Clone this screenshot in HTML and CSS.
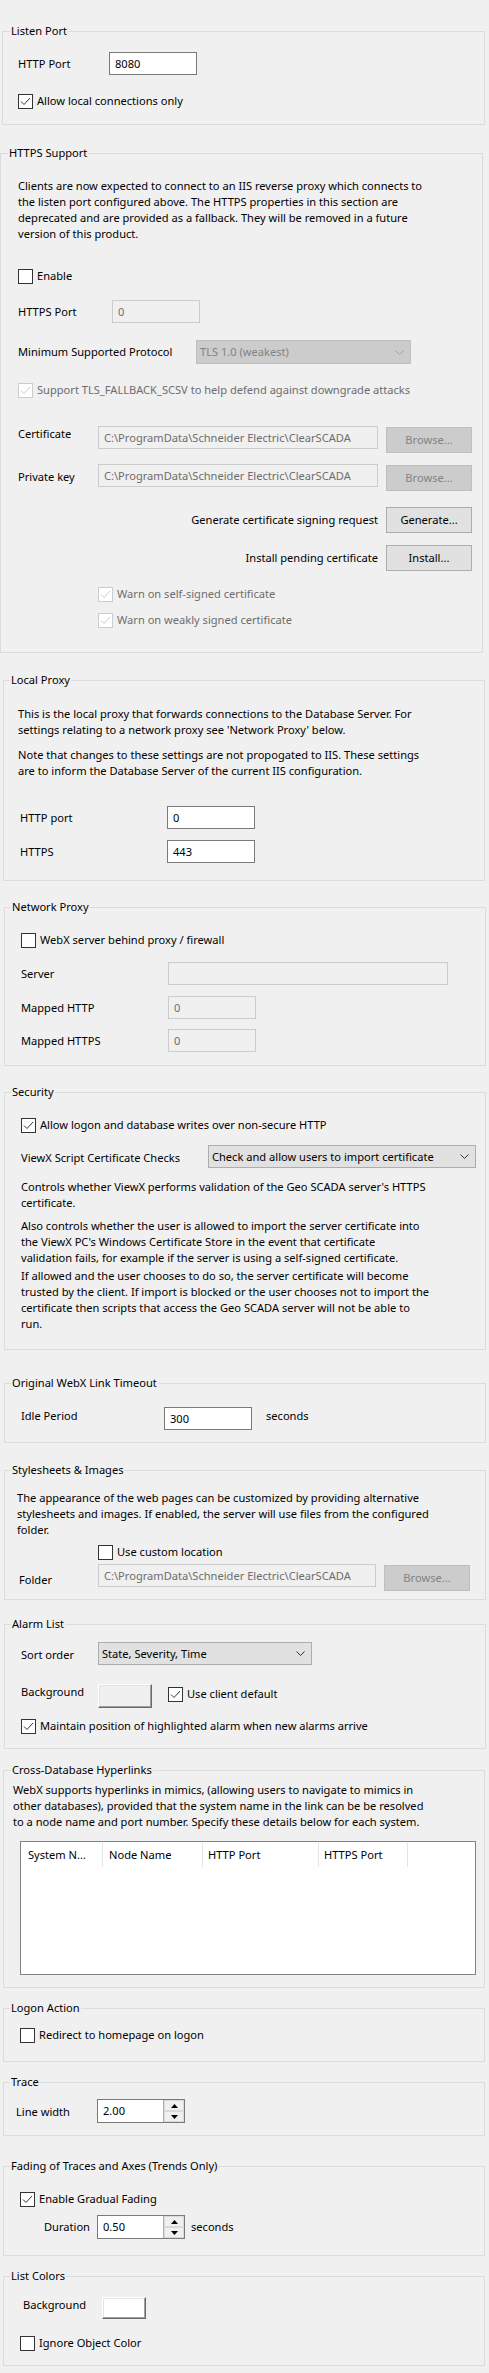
FILE: index.html
```html
<!DOCTYPE html>
<html>
<head>
<meta charset="utf-8">
<title>WebX Settings</title>
<link rel="stylesheet" href="styles.css">
</head>
<body>

<fieldset class="grp g1">
  <legend class="lg7">Listen Port</legend>
  <div class="in">
    <div class="row h23 mt13"><span class="lbl w91">HTTP Port</span><span class="tb w88">8080</span></div>
    <div class="chk mt18"><span class="cb"><svg class="tick" viewBox="0 0 13 13"><polyline points="2,6.5 5,9.5 11,3"/></svg></span>Allow local connections only</div>
  </div>
</fieldset>

<fieldset class="grp g2">
  <legend class="lg7">HTTPS Support</legend>
  <div class="in">
    <p class="para mt17">Clients are now expected to connect to an IIS reverse proxy which connects to<br>the listen port configured above. The HTTPS properties in this section are<br>deprecated and are provided as a fallback. They will be removed in a future<br>version of this product.</p>
    <div class="chk mt26"><span class="cb"></span>Enable</div>
    <div class="row h23 mt16"><span class="lbl w94">HTTPS Port</span><span class="tb dis w88">0</span></div>
    <div class="row h24 mt17"><span class="lbl w178">Minimum Supported Protocol</span><span class="cmb dis w215"><span class="cmb-t">TLS 1.0 (weakest)</span><svg class="chev" viewBox="0 0 9 5"><polyline points="0.5,0.5 4.5,4.5 8.5,0.5"/></svg></span></div>
    <div class="chk dis mt18"><span class="cb"><svg class="tick" viewBox="0 0 13 13"><polyline points="2,6.5 5,9.5 11,3"/></svg></span>Support TLS_FALLBACK_SCSV to help defend against downgrade attacks</div>
    <div class="row top mt28"><span class="lbl w80">Certificate</span><span class="tb dis w280">C:\ProgramData\Schneider Electric\ClearSCADA</span><span class="btn dis ml8 mt1">Browse...</span></div>
    <div class="row top mt11"><span class="lbl w80 drop5">Private key</span><span class="tb dis w280">C:\ProgramData\Schneider Electric\ClearSCADA</span><span class="btn dis ml8 mt1">Browse...</span></div>
    <div class="row mt16"><span class="rlbl">Generate certificate signing request</span><span class="btn">Generate...</span></div>
    <div class="row mt12"><span class="rlbl">Install pending certificate</span><span class="btn">Install...</span></div>
    <div class="chk dis mt15 ml80"><span class="cb"><svg class="tick" viewBox="0 0 13 13"><polyline points="2,6.5 5,9.5 11,3"/></svg></span>Warn on self-signed certificate</div>
    <div class="chk dis mt10 ml80"><span class="cb"><svg class="tick" viewBox="0 0 13 13"><polyline points="2,6.5 5,9.5 11,3"/></svg></span>Warn on weakly signed certificate</div>
  </div>
</fieldset>

<fieldset class="grp g3">
  <legend>Local Proxy</legend>
  <div class="in">
    <p class="para mt18">This is the local proxy that forwards connections to the Database Server. For<br>settings relating to a network proxy see 'Network Proxy' below.</p>
    <p class="para mt9">Note that changes to these settings are not propogated to IIS. These settings<br>are to inform the Database Server of the current IIS configuration.</p>
    <div class="row h23 mt27 ml2"><span class="lbl w147">HTTP port</span><span class="tb w88">0</span></div>
    <div class="row h23 mt11 ml2"><span class="lbl w147">HTTPS</span><span class="tb w88">443</span></div>
  </div>
</fieldset>

<fieldset class="grp g4">
  <legend>Network Proxy</legend>
  <div class="in">
    <div class="chk mt17"><span class="cb"></span>WebX server behind proxy / firewall</div>
    <div class="row h23 mt14"><span class="lbl w147">Server</span><span class="tb dis w280"></span></div>
    <div class="row h23 mt11"><span class="lbl w147">Mapped HTTP</span><span class="tb dis w88">0</span></div>
    <div class="row h23 mt10"><span class="lbl w147">Mapped HTTPS</span><span class="tb dis w88">0</span></div>
  </div>
</fieldset>

<fieldset class="grp g5">
  <legend>Security</legend>
  <div class="in">
    <div class="chk mt17"><span class="cb"><svg class="tick" viewBox="0 0 13 13"><polyline points="2,6.5 5,9.5 11,3"/></svg></span>Allow logon and database writes over non-secure HTTP</div>
    <div class="row h23 mt12"><span class="lbl w187 drop5">ViewX Script Certificate Checks</span><span class="cmb w268"><span class="cmb-t">Check and allow users to import certificate</span><svg class="chev" viewBox="0 0 9 5"><polyline points="0.5,0.5 4.5,4.5 8.5,0.5"/></svg></span></div>
    <p class="para mt11">Controls whether ViewX performs validation of the Geo SCADA server's HTTPS<br>certificate.</p>
    <p class="para mt7">Also controls whether the user is allowed to import the server certificate into<br>the ViewX PC's Windows Certificate Store in the event that certificate<br>validation fails, for example if the server is using a self-signed certificate.</p>
    <p class="para mt2">If allowed and the user chooses to do so, the server certificate will become<br>trusted by the client. If import is blocked or the user chooses not to import the<br>certificate then scripts that access the Geo SCADA server will not be able to<br>run.</p>
  </div>
</fieldset>

<fieldset class="grp g6">
  <legend>Original WebX Link Timeout</legend>
  <div class="in">
    <div class="row h23 mt16"><span class="lbl w143 drop1">Idle Period</span><span class="tb w88">300</span><span class="unit ml14 drop1">seconds</span></div>
  </div>
</fieldset>

<fieldset class="grp g7">
  <legend>Stylesheets &amp; Images</legend>
  <div class="in">
    <p class="para mt12">The appearance of the web pages can be customized by providing alternative<br>stylesheets and images. If enabled, the server will use files from the configured<br>folder.</p>
    <div class="chk mt6 ml81"><span class="cb"></span>Use custom location</div>
    <div class="row top mt4"><span class="lbl w79 ml2 drop8">Folder</span><span class="tb dis w278">C:\ProgramData\Schneider Electric\ClearSCADA</span><span class="btn dis ml8 mt1">Browse...</span></div>
  </div>
</fieldset>

<fieldset class="grp g8">
  <legend>Alarm List</legend>
  <div class="in">
    <div class="row h23 mt10"><span class="lbl w77 drop5">Sort order</span><span class="cmb w214"><span class="cmb-t">State, Severity, Time</span><svg class="chev" viewBox="0 0 9 5"><polyline points="0.5,0.5 4.5,4.5 8.5,0.5"/></svg></span></div>
    <div class="row top mt19"><span class="lbl w77">Background</span><span class="clr clr-gray"></span><span class="chk ml16 mt2"><span class="cb"><svg class="tick" viewBox="0 0 13 13"><polyline points="2,6.5 5,9.5 11,3"/></svg></span>Use client default</span></div>
    <div class="chk mt10"><span class="cb"><svg class="tick" viewBox="0 0 13 13"><polyline points="2,6.5 5,9.5 11,3"/></svg></span>Maintain position of highlighted alarm when new alarms arrive</div>
  </div>
</fieldset>

<fieldset class="grp g9">
  <legend class="lg7">Cross-Database Hyperlinks</legend>
  <div class="in">
    <p class="para mt4">WebX supports hyperlinks in mimics, (allowing users to navigate to mimics in<br>other databases), provided that the system name in the link can be be resolved<br>to a node name and port number. Specify these details below for each system.</p>
    <div class="lv mt11 ml7">
      <div class="lv-head">
        <span class="lv-col c1">System N...</span>
        <span class="lv-col c2">Node Name</span>
        <span class="lv-col c3">HTTP Port</span>
        <span class="lv-col c4">HTTPS Port</span>
      </div>
    </div>
  </div>
</fieldset>

<fieldset class="grp g10">
  <legend>Logon Action</legend>
  <div class="in">
    <div class="chk mt11"><span class="cb"></span>Redirect to homepage on logon</div>
  </div>
</fieldset>

<fieldset class="grp g11">
  <legend>Trace</legend>
  <div class="in">
    <div class="row h24 mt9"><span class="lbl w81 drop5">Line width</span>
      <span class="spin"><span class="spin-v">2.00</span><span class="spin-b"><span class="sb"><svg class="tri" viewBox="0 0 7 4"><polygon points="0,4 3.5,0 7,4"/></svg></span><span class="sb"><svg class="tri" viewBox="0 0 7 4"><polygon points="0,0 7,0 3.5,4"/></svg></span></span></span>
    </div>
  </div>
</fieldset>

<fieldset class="grp g12">
  <legend>Fading of Traces and Axes (Trends Only)</legend>
  <div class="in">
    <div class="chk mt17"><span class="cb"><svg class="tick" viewBox="0 0 13 13"><polyline points="2,6.5 5,9.5 11,3"/></svg></span>Enable Gradual Fading</div>
    <div class="row h24 mt8"><span class="lbl w53 ml24">Duration</span>
      <span class="spin"><span class="spin-v">0.50</span><span class="spin-b"><span class="sb"><svg class="tri" viewBox="0 0 7 4"><polygon points="0,4 3.5,0 7,4"/></svg></span><span class="sb"><svg class="tri" viewBox="0 0 7 4"><polygon points="0,0 7,0 3.5,4"/></svg></span></span></span>
      <span class="unit ml6">seconds</span>
    </div>
  </div>
</fieldset>

<fieldset class="grp g13">
  <legend>List Colors</legend>
  <div class="in">
    <div class="row top mt13"><span class="lbl w79 ml3">Background</span><span class="clr clr-white"></span></div>
    <div class="chk mt16"><span class="cb"></span>Ignore Object Color</div>
  </div>
</fieldset>

</body>
</html>
```

FILE: styles.css
```css
* { box-sizing: border-box; }

html, body { margin: 0; padding: 0; }

body {
  width: 489px;
  height: 2373px;
  overflow: hidden;
  padding-top: 23px;
  background: #f0f0f0;
  color: #000;
  font-family: "Noto Sans", "Open Sans", sans-serif;
  font-size: 11.1px;
  line-height: 16px;
}

/* group boxes */
.grp {
  border: 1px solid #dcdcdc;
  margin: 0;
  padding: 0;
  min-width: 0;
}
.grp legend {
  padding: 0 1px;
  margin-left: 6px;
  line-height: 16px;
  height: 16px;
}
.grp legend.lg7 { margin-left: 7px; }

.g1  { margin: 0 4px 0 2px;    padding-bottom: 15px; }
.g2  { margin: 20px 6px 0 0;   padding-bottom: 24px; }
.g3  { margin: 19px 4px 0 3px; padding-bottom: 17px; }
.g4  { margin: 18px 3px 0 4px; padding-bottom: 13px; }
.g5  { margin: 18px 3px 0 4px; padding-bottom: 17px; }
.g6  { margin: 25px 3px 0 4px; padding-bottom: 12px; }
.g7  { margin: 19px 3px 0 4px; padding-bottom: 8px; }
.g8  { margin: 16px 3px 0 4px; padding-bottom: 14px; }
.g9  { margin: 13px 4px 0 3px; padding-bottom: 12px; }
.g10 { margin: 12px 4px 0 3px; padding-bottom: 18px; }
.g11 { margin: 12px 4px 0 3px; padding-bottom: 12px; }
.g12 { margin: 22px 4px 0 3px; padding-bottom: 16px; }
.g13 { margin: 12px 4px 0 3px; padding-bottom: 14px; }

.g1 .in  { padding-left: 15px; }
.g2 .in  { padding-left: 17px; }
.g3 .in  { padding-left: 14px; }
.g4 .in, .g5 .in, .g6 .in, .g8 .in { padding-left: 16px; }
.g7 .in  { padding-left: 12px; }
.g9 .in  { padding-left: 9px; }
.g10 .in, .g12 .in, .g13 .in { padding-left: 16px; }
.g11 .in { padding-left: 12px; }

/* text */
.para { margin: 0; white-space: nowrap; line-height: 16px; }

/* rows */
.row { display: flex; align-items: center; }
.row.top { align-items: flex-start; }
.h23 { height: 23px; }
.h24 { height: 24px; }
.lbl { flex: none; white-space: nowrap; line-height: 16px; }
.rlbl { width: 360px; margin-right: 8px; text-align: right; white-space: nowrap; }
.unit { white-space: nowrap; }
.drop1 { align-self: flex-start; padding-top: 1px; }
.drop5 { align-self: flex-start; padding-top: 5px; }
.drop8 { align-self: flex-start; padding-top: 8px; }

/* spacing utilities */
.mt1 { margin-top: 1px; }
.mt2 { margin-top: 2px; }
.mt4 { margin-top: 4px; }
.mt6 { margin-top: 6px; }
.mt7 { margin-top: 7px; }
.mt8 { margin-top: 8px; }
.mt9 { margin-top: 9px; }
.mt10 { margin-top: 10px; }
.mt11 { margin-top: 11px; }
.mt12 { margin-top: 12px; }
.mt13 { margin-top: 13px; }
.mt14 { margin-top: 14px; }
.mt15 { margin-top: 15px; }
.mt16 { margin-top: 16px; }
.mt17 { margin-top: 17px; }
.mt18 { margin-top: 18px; }
.mt19 { margin-top: 19px; }
.mt26 { margin-top: 26px; }
.mt27 { margin-top: 27px; }
.mt28 { margin-top: 28px; }
.ml2 { margin-left: 2px; }
.ml3 { margin-left: 3px; }
.ml6 { margin-left: 6px; }
.ml7 { margin-left: 7px; }
.ml8 { margin-left: 8px; }
.ml14 { margin-left: 14px; }
.ml16 { margin-left: 16px; }
.ml24 { margin-left: 24px; }
.ml80 { margin-left: 80px; }
.ml81 { margin-left: 81px; }

/* widths */
.w53 { width: 53px; }
.w77 { width: 77px; }
.w79 { width: 79px; }
.w80 { width: 80px; }
.w81 { width: 81px; }
.w88 { width: 88px; }
.w91 { width: 91px; }
.w94 { width: 94px; }
.w143 { width: 143px; }
.w147 { width: 147px; }
.w178 { width: 178px; }
.w187 { width: 187px; }
.w214 { width: 214px; }
.w215 { width: 215px; }
.w268 { width: 268px; }
.w278 { width: 278px; }
.w280 { width: 280px; }

/* text box */
.tb {
  flex: none;
  display: block;
  height: 23px;
  line-height: 21px;
  padding-left: 5px;
  border: 1px solid #7a7a7a;
  background: #fff;
  white-space: nowrap;
  overflow: hidden;
}
.tb.dis {
  border-color: #cccccc;
  background: #f0f0f0;
  color: #6d6d6d;
}

/* combo box */
.cmb {
  flex: none;
  display: flex;
  align-items: center;
  height: 23px;
  padding-left: 3px;
  border: 1px solid #adadad;
  background: #e1e1e1;
  overflow: hidden;
}
.h24 .cmb { height: 24px; }
.cmb-t { flex: 1; white-space: nowrap; overflow: hidden; }
.chev {
  flex: none;
  width: 9px;
  height: 5px;
  margin: 0 6px 0 6px;
  fill: none;
  stroke: #333;
  stroke-width: 1;
}
.cmb.dis { background: #cccccc; border-color: #bfbfbf; color: #838383; }
.cmb.dis .chev { stroke: #a0a0a0; }

/* buttons */
.btn {
  flex: none;
  display: flex;
  align-items: center;
  justify-content: center;
  width: 86px;
  height: 26px;
  border: 1px solid #adadad;
  background: #e1e1e1;
  white-space: nowrap;
}
.btn.dis { background: #cccccc; border-color: #bfbfbf; color: #838383; }

/* check boxes */
.chk {
  display: flex;
  align-items: center;
  height: 16px;
  white-space: nowrap;
}
.cb {
  flex: none;
  display: block;
  width: 15px;
  height: 15px;
  margin-right: 4px;
  border: 1px solid #333;
  background: #fff;
}
.tick {
  display: block;
  width: 13px;
  height: 13px;
  fill: none;
  stroke: #333;
  stroke-width: 1;
}
.chk.dis { color: #6d6d6d; }
.chk.dis .cb { border-color: #cccccc; }
.chk.dis .tick { stroke: #cccccc; }

/* colour buttons */
.clr {
  flex: none;
  display: block;
  border: 1px solid;
  border-color: #ffffff #696969 #696969 #ffffff;
  box-shadow: inset -1px -1px 0 #a0a0a0, inset 1px 1px 0 #e3e3e3;
}
.clr-gray { width: 54px; height: 24px; background: #f0f0f0; }
.clr-white { width: 44px; height: 22px; background: #ffffff; }

/* list view */
.lv {
  width: 456px;
  height: 134px;
  border: 1px solid #828282;
  background: #fff;
}
.lv-head { display: flex; height: 24px; margin-top: 1px; }
.lv-col {
  display: flex;
  align-items: center;
  height: 24px;
  border-right: 1px solid #e5e5e5;
  white-space: nowrap;
  overflow: hidden;
}
.c1 { width: 82px; padding-left: 7px; }
.c2 { width: 100px; padding-left: 6px; }
.c3 { width: 116px; padding-left: 5px; }
.c4 { width: 89px; padding-left: 5px; }

/* spinner */
.spin {
  flex: none;
  display: flex;
  width: 88px;
  height: 24px;
  border: 1px solid #7a7a7a;
  background: #fff;
}
.spin-v { flex: 1; padding-left: 5px; line-height: 22px; }
.spin-b {
  flex: none;
  display: flex;
  flex-direction: column;
  width: 21px;
  border-left: 1px solid #b0b0b0;
}
.sb {
  flex: 1;
  display: flex;
  align-items: center;
  justify-content: center;
  background: #f0f0f0;
  border: 1px solid #dadada;
}
.tri { width: 7px; height: 4px; fill: #000; }
```
